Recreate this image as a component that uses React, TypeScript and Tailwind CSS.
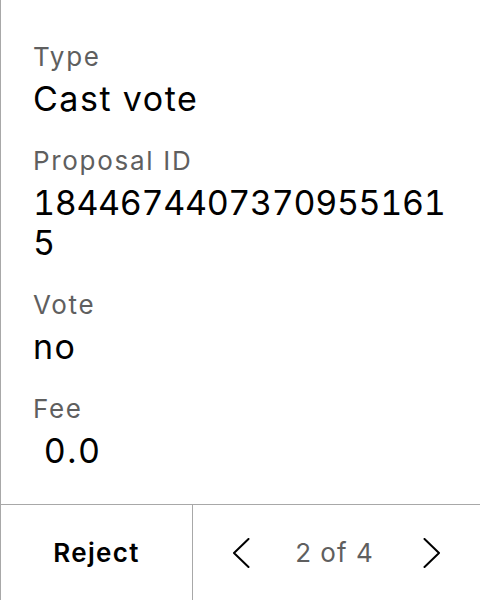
const fields = [
  { label: "Type", value: "Cast vote", numeric: false },
  { label: "Proposal ID", value: "18446744073709551615", numeric: true },
  { label: "Vote", value: "no", numeric: false },
  { label: "Fee", value: " 0.0", numeric: false },
];

function Chevron({ dir }: { dir: "left" | "right" }) {
  return (
    <svg width="18" height="30" viewBox="0 0 18 30" fill="none" className="text-black">
      <path
        d={dir === "left" ? "M16.5 1 L2 15 L16.5 29" : "M1.5 1 L16 15 L1.5 29"}
        stroke="currentColor"
        strokeWidth="2"
        strokeLinecap="round"
        strokeLinejoin="round"
      />
    </svg>
  );
}

export default function App() {
  return (
    <div
      className="flex h-[600px] w-[480px] flex-col border-l border-[#a8a8a8] bg-white"
      style={{ fontFamily: "Inter, 'Noto Sans', sans-serif" }}
    >
      <div className="flex flex-1 flex-col gap-[26px] pl-8 pr-8 pt-[41px]">
        {fields.map((f) => (
          <div key={f.label} className="flex flex-col gap-[6px]">
            <span className="text-[26px] leading-8 tracking-[0.065em] text-[#5f5f5f]">
              {f.label}
            </span>
            <span
              className={
                f.numeric
                  ? "break-all text-[34px] leading-10 tracking-[-0.01em] tabular-nums text-black"
                  : "whitespace-pre-wrap text-[34px] leading-10 tracking-[0.045em] tabular-nums text-black"
              }
            >
              {f.value}
            </span>
          </div>
        ))}
      </div>
      <div className="flex h-24 border-t border-[#a8a8a8]">
        <button className="flex w-[192px] items-center justify-center border-r border-[#a8a8a8] text-[26px] font-semibold tracking-[0.05em] text-black">
          Reject
        </button>
        <div className="flex flex-1 items-center justify-center gap-[45px]">
          <Chevron dir="left" />
          <span className="text-[26px] tracking-[0.04em] text-[#5f5f5f]">2 of 4</span>
          <span className="ml-[4px] flex">
            <Chevron dir="right" />
          </span>
        </div>
      </div>
    </div>
  );
}
